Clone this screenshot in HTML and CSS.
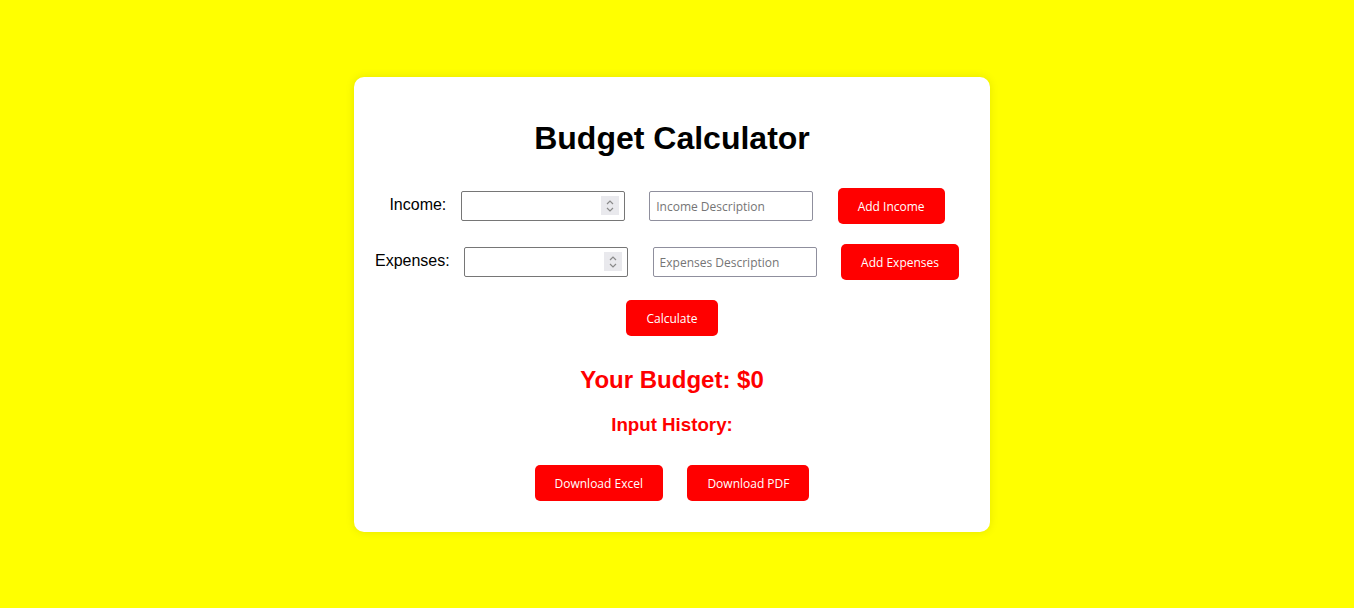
FILE: index.html
```html
<!DOCTYPE html>
<html lang="en">
<head>
<meta charset="utf-8">
<title>Budget Calculator</title>
<link rel="stylesheet" href="styles.css">
</head>
<body>
<div class="card">
  <h1 class="title">Budget Calculator</h1>
  <div class="row">
    <label class="label">Income:</label>
    <span class="num-wrap"><input class="field num" type="number"><span class="spin"><svg width="10" height="14" viewBox="0 0 10 14"><path d="M2 5 L5 2 L8 5" fill="none" stroke="#8a8a8a" stroke-width="1.2"/><path d="M2 9 L5 12 L8 9" fill="none" stroke="#8a8a8a" stroke-width="1.2"/></svg></span></span>
    <input class="field desc" type="text" placeholder="Income Description">
    <button class="btn">Add Income</button>
  </div>
  <div class="row">
    <label class="label">Expenses:</label>
    <span class="num-wrap"><input class="field num" type="number"><span class="spin"><svg width="10" height="14" viewBox="0 0 10 14"><path d="M2 5 L5 2 L8 5" fill="none" stroke="#8a8a8a" stroke-width="1.2"/><path d="M2 9 L5 12 L8 9" fill="none" stroke="#8a8a8a" stroke-width="1.2"/></svg></span></span>
    <input class="field desc" type="text" placeholder="Expenses Description">
    <button class="btn">Add Expenses</button>
  </div>
  <div class="row">
    <button class="btn">Calculate</button>
  </div>
  <h2 class="budget">Your Budget: $0</h2>
  <h3 class="history">Input History:</h3>
  <ul class="history-list"></ul>
  <div class="row">
    <button class="btn">Download Excel</button>
    <button class="btn">Download PDF</button>
  </div>
</div>
</body>
</html>
```
FILE: styles.css
```css
html, body {
  margin: 0;
  padding: 0;
}
body {
  background: #ffff00;
  font-family: "Liberation Sans", Arial, sans-serif;
  display: flex;
  justify-content: center;
  align-items: center;
  min-height: 100vh;
  padding: 1px 10px 0 0;
  box-sizing: border-box;
}
.card {
  width: 636px;
  box-sizing: border-box;
  background: #ffffff;
  border-radius: 10px;
  padding: 20px 20px 21px;
  box-shadow: 0 0 10px rgba(0, 0, 0, 0.1);
  text-align: center;
}
.title {
  font-size: 32px;
  font-weight: bold;
  margin: 22.44px 0 21.44px;
  color: #000;
}
.row {
  display: block;
}
.label {
  font-size: 16px;
  color: #000;
}
.num-wrap {
  position: relative;
  display: inline-block;
  margin: 10px;
  vertical-align: middle;
}
.field {
  width: 164px;
  height: 30px;
  box-sizing: border-box;
  padding: 2px 6px;
  font-family: "Open Sans", sans-serif;
  font-size: 12px;
  border-radius: 2px;
  background: #fff;
  vertical-align: middle;
  outline: none;
}
.num {
  border: 1px solid #767676;
  margin: 0;
  -moz-appearance: textfield;
}
.num::-webkit-outer-spin-button,
.num::-webkit-inner-spin-button {
  -webkit-appearance: none;
  margin: 0;
}
.spin {
  position: absolute;
  right: 6px;
  top: 5px;
  width: 18px;
  height: 19px;
  background: #e9e9ed;
  display: flex;
  align-items: center;
  justify-content: center;
}
.desc {
  border: 1px solid #8f8f9d;
  margin: 10px;
}
.desc::placeholder {
  color: #757575;
}
.btn {
  background: #ff0000;
  color: #ffffff;
  border: none;
  border-radius: 5px;
  padding: 10px 20px;
  height: 36px;
  font-family: "Open Sans", sans-serif;
  font-size: 12px;
  margin: 10px;
  vertical-align: middle;
  cursor: pointer;
}
.budget {
  color: #ff0000;
  font-size: 24px;
  font-weight: bold;
  margin: 19.92px 0;
}
.history {
  color: #ff0000;
  font-size: 18.72px;
  font-weight: bold;
  margin: 18.72px 0;
}
.history-list {
  margin: 0;
  padding: 0;
  list-style: none;
}
```
